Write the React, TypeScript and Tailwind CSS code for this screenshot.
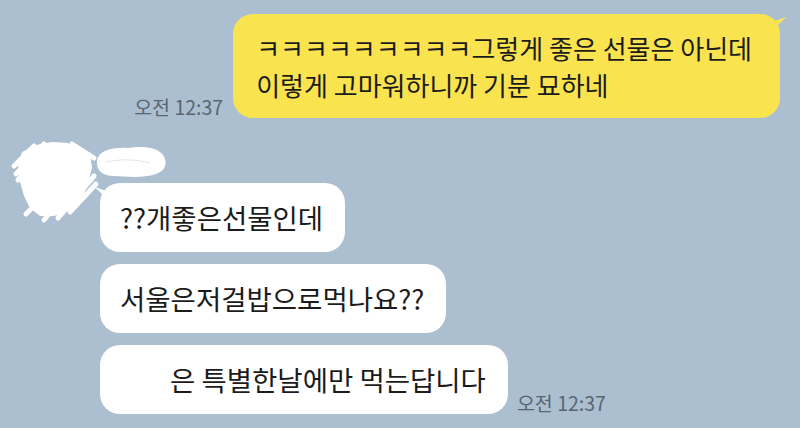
import React from "react";

const FONT = "font-['Noto_Sans_CJK_KR','Noto_Sans',sans-serif]";

// white scribble that hides the sender's profile picture
function AvatarScribble() {
  return (
    <svg width="84" height="80" viewBox="0 0 84 80" className="shrink-0 overflow-visible">
      <path
        d="M10 12 L24 5 L40 2 L56 3 L66 9 L78 14 L80 28 L76 42 L72 54 L64 64 L54 72 L42 76 L28 76 L18 68 L12 56 L8 42 L6 26 Z"
        fill="#ffffff"
      />
      <g stroke="#ffffff" strokeWidth="5" strokeLinecap="round" fill="none">
        <path d="M2 26 L22 6" />
        <path d="M4 34 L32 4" />
        <path d="M6 40 L14 30" />
        <path d="M14 74 L30 58" />
        <path d="M32 80 L74 30" />
        <path d="M46 78 L82 36" />
        <path d="M58 72 L84 44" />
        <path d="M60 4 L82 18" />
      </g>
    </svg>
  );
}

// scribble over the sender's name
function NameScribble() {
  return (
    <svg width="70" height="42" viewBox="0 0 70 42" className="-ml-[4px] overflow-visible">
      <path
        d="M1 20 C3 10 18 7 32 8 C46 6 61 7 67 15 C72 22 70 31 60 34 C48 38 32 37 18 36 C7 36 0 31 1 20 Z"
        fill="#ffffff"
      />
      <path d="M10 22 C24 19 40 19 54 23" stroke="#dfe6ee" strokeWidth="1" fill="none" />
    </svg>
  );
}

function Incoming({ children, tail }: { children: React.ReactNode; tail?: boolean }) {
  return (
    <div className="relative self-start bg-white rounded-[20px] pl-[20px] pr-[22px] py-[15px] text-[27.5px] leading-[39px] text-[#1b1b1b]">
      {tail && (
        <svg width="14" height="16" viewBox="0 0 14 16" className="absolute -left-[6px] top-[3px]">
          <path d="M0 1 C5 2 10 4 14 6 L14 16 C10 10 6 5 0 1 Z" fill="#ffffff" />
        </svg>
      )}
      {children}
    </div>
  );
}

function Time() {
  return <span className="text-[19.5px] leading-none mb-[2px] text-[#586573]">오전 12:37</span>;
}

export default function App() {
  return (
    <div className={`w-[800px] h-[428px] bg-[#abbfd1] overflow-hidden pt-[14px] ${FONT}`}>
      {/* my message */}
      <div className="flex justify-end items-end gap-[10px] pr-[20px]">
        <Time />
        <div className="relative bg-[#f9e34f] rounded-[20px] pl-[23px] pr-[28px] py-[15px] text-[26px] leading-[37px] text-[#1b1b1b]">
          <svg width="14" height="16" viewBox="0 0 14 16" className="absolute -right-[7px] top-[2px]">
            <path d="M14 1 C9 2 4 4 0 6 L0 16 C4 10 8 5 14 1 Z" fill="#f9e34f" />
          </svg>
          <p>ㅋㅋㅋㅋㅋㅋㅋㅋㅋ그렇게 좋은 선물은 아닌데</p>
          <p>이렇게 고마워하니까 기분 묘하네</p>
        </div>
      </div>

      {/* their messages */}
      <div className="flex gap-[4px] pl-[12px] mt-[22px]">
        <AvatarScribble />
        <div className="flex flex-col">
          <NameScribble />
          <div className="mt-[1px] flex flex-col gap-[12px]">
            <Incoming tail>??개좋은선물인데</Incoming>
            <Incoming>서울은저걸밥으로먹나요??</Incoming>
            <div className="flex items-end gap-[9px]">
              <Incoming>
                <span className="inline-block w-[50px]" />은 특별한날에만 먹는답니다
              </Incoming>
              <Time />
            </div>
          </div>
        </div>
      </div>
    </div>
  );
}
